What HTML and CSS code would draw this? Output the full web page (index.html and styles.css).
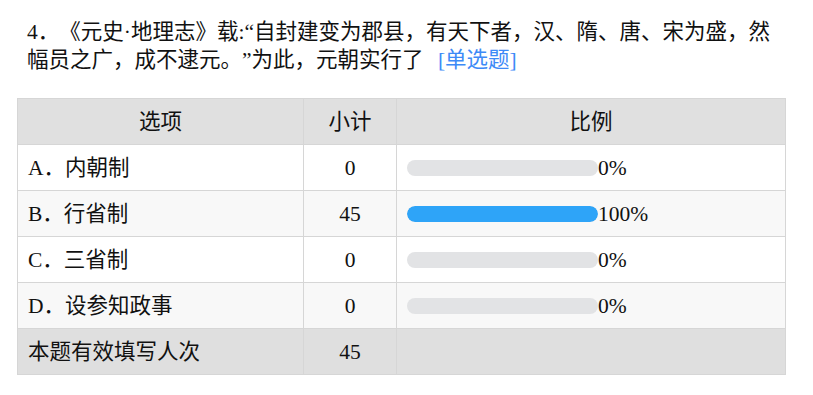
FILE: index.html
```html
<!DOCTYPE html>
<html lang="zh-CN">
<head>
<meta charset="utf-8">
<title>题目统计</title>
<link rel="stylesheet" href="styles.css">
</head>
<body>
<div class="question">
  <div class="title">4．《元史·地理志》载:“自封建变为郡县，有天下者，汉、隋、唐、宋为盛，然幅员之广，成不逮元。”为此，元朝实行了 <span class="qtype">[单选题]</span></div>
  <table class="stats">
    <thead>
      <tr><th class="c-opt">选项</th><th class="c-num">小计</th><th class="c-ratio">比例</th></tr>
    </thead>
    <tbody>
      <tr><td>A．内朝制</td><td class="num">0</td><td><div class="ratio"><div class="bar"><div class="fill" style="width:0%"></div></div><span>0%</span></div></td></tr>
      <tr><td>B．行省制</td><td class="num">45</td><td><div class="ratio"><div class="bar"><div class="fill" style="width:100%"></div></div><span>100%</span></div></td></tr>
      <tr><td>C．三省制</td><td class="num">0</td><td><div class="ratio"><div class="bar"><div class="fill" style="width:0%"></div></div><span>0%</span></div></td></tr>
      <tr><td>D．设参知政事</td><td class="num">0</td><td><div class="ratio"><div class="bar"><div class="fill" style="width:0%"></div></div><span>0%</span></div></td></tr>
    </tbody>
    <tfoot>
      <tr><td>本题有效填写人次</td><td class="num">45</td><td></td></tr>
    </tfoot>
  </table>
</div>
</body>
</html>
```

FILE: styles.css
```css
html, body {
  margin: 0;
  padding: 0;
  background: #fff;
}
body {
  font-family: "Liberation Serif", "Noto Sans CJK SC", serif;
  font-size: 21.5px;
  color: #111;
  text-spacing-trim: space-all;
}
.question {
  width: 769px;
  margin-left: 17px;
  padding-top: 18px;
}
.title {
  padding: 0 0 0 10px;
  width: 759px;
  line-height: 28px;
}
.qtype {
  display: inline-block;
  line-height: 28px;
  height: 28px;
  overflow: hidden;
  vertical-align: top;
  color: #3d8af7;
  margin-left: 9px;
}
.stats {
  margin-top: 24px;
  width: 769px;
  border-collapse: collapse;
  table-layout: fixed;
}
.stats th,
.stats td {
  box-sizing: border-box;
  border: 1px solid #d6d6d6;
  height: 46px;
  padding: 0 10px;
  font-weight: normal;
  line-height: 24px;
  vertical-align: middle;
}
.stats th {
  background: #e0e0e0;
  text-align: center;
}
.c-opt { width: 286px; }
.c-num { width: 93px; }
.c-ratio { width: auto; }
.stats tbody tr:nth-child(odd) td { background: #fff; }
.stats tbody tr:nth-child(even) td { background: #f8f8f8; }
.stats tfoot td { background: #dfdfdf; }
.stats td.num { text-align: center; }
.ratio {
  display: flex;
  align-items: center;
}
.bar {
  width: 191px;
  height: 16px;
  border-radius: 8px;
  background: #e2e3e5;
  overflow: hidden;
  flex: none;
}
.fill {
  height: 100%;
  background: #2ea4f8;
  border-radius: 8px;
}
```
